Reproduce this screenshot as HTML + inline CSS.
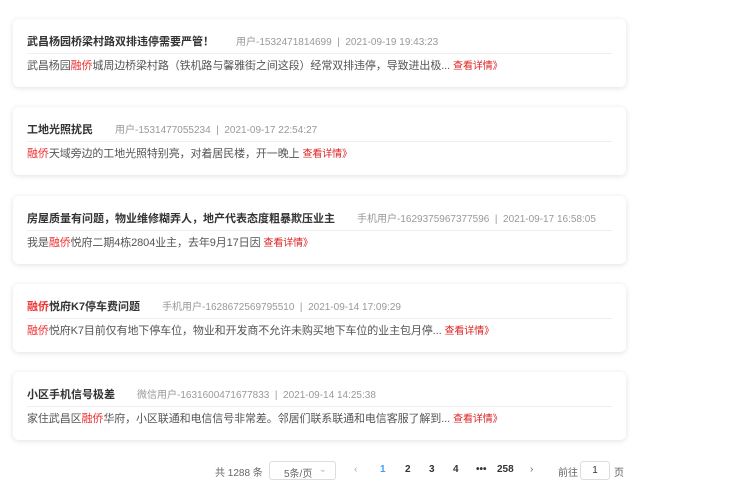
<!DOCTYPE html>
<html><head><meta charset="utf-8"><style>
*{margin:0;padding:0;box-sizing:border-box}
body{width:740px;height:500px;background:#fff;font-family:"Liberation Sans","Noto Sans CJK SC",sans-serif;position:relative;overflow:hidden}
.card{position:absolute;left:13px;width:613px;height:68px;background:#fff;border-radius:6px;box-shadow:0 1px 6px rgba(0,0,0,.12)}
.t{position:absolute;left:14px;top:14px;font-size:11px;font-weight:bold;color:#333;white-space:nowrap}
.t span.m{font-weight:normal;color:#999;font-size:10px;margin-left:22px}
.hl{position:absolute;left:14px;right:14px;top:34px;border-top:1px solid #eee}
.b{position:absolute;left:14px;top:38px;font-size:11px;color:#555;white-space:nowrap;letter-spacing:-0.1px}
.r{color:#e33}
.more{color:#d22;font-size:10px}
.pg{position:absolute;top:464px;font-size:10px;color:#666;white-space:nowrap}
</style></head><body>
<div class="card" style="top:19px"><div class="t">武昌杨园桥梁村路双排违停需要严管！<span class="m">用户-1532471814699 &nbsp;|&nbsp; 2021-09-19 19:43:23</span></div><div class="hl"></div><div class="b">武昌杨园<span class="r">融侨</span>城周边桥梁村路（铁机路与馨雅街之间这段）经常双排违停，导致进出极... <span class="more">查看详情》</span></div></div>
<div class="card" style="top:107px"><div class="t">工地光照扰民<span class="m">用户-1531477055234 &nbsp;|&nbsp; 2021-09-17 22:54:27</span></div><div class="hl"></div><div class="b"><span class="r">融侨</span>天域旁边的工地光照特别亮，对着居民楼，开一晚上 <span class="more">查看详情》</span></div></div>
<div class="card" style="top:196px"><div class="t">房屋质量有问题，物业维修糊弄人，地产代表态度粗暴欺压业主<span class="m">手机用户-1629375967377596 &nbsp;|&nbsp; 2021-09-17 16:58:05</span></div><div class="hl"></div><div class="b">我是<span class="r">融侨</span>悦府二期4栋2804业主，去年9月17日因 <span class="more">查看详情》</span></div></div>
<div class="card" style="top:284px"><div class="t"><span class="r">融侨</span>悦府K7停车费问题<span class="m">手机用户-1628672569795510 &nbsp;|&nbsp; 2021-09-14 17:09:29</span></div><div class="hl"></div><div class="b"><span class="r">融侨</span>悦府K7目前仅有地下停车位，物业和开发商不允许未购买地下车位的业主包月停... <span class="more">查看详情》</span></div></div>
<div class="card" style="top:372px"><div class="t">小区手机信号极差<span class="m">微信用户-1631600471677833 &nbsp;|&nbsp; 2021-09-14 14:25:38</span></div><div class="hl"></div><div class="b">家住武昌区<span class="r">融侨</span>华府，小区联通和电信信号非常差。邻居们联系联通和电信客服了解到... <span class="more">查看详情》</span></div></div>
<div class="pg" style="left:215px">共 1288 条</div>
<div style="position:absolute;left:269px;top:461px;width:67px;height:19px;border:1px solid #ddd;border-radius:3px;font-size:10px;color:#666;padding:3px 0 0 14px">5条/页<span style="position:absolute;right:8px;top:2px;color:#bbb">⌄</span></div>
<div class="pg" style="left:354px;color:#aaa">‹</div>
<div class="pg" style="left:380px;color:#409eff;font-weight:bold">1</div>
<div class="pg" style="left:405px;font-weight:bold;color:#333">2</div>
<div class="pg" style="left:429px;font-weight:bold;color:#333">3</div>
<div class="pg" style="left:453px;font-weight:bold;color:#333">4</div>
<div class="pg" style="left:476px;font-weight:bold;color:#333">•••</div>
<div class="pg" style="left:497px;font-weight:bold;color:#333">258</div>
<div class="pg" style="left:530px;color:#666">›</div>
<div class="pg" style="left:558px">前往</div>
<div style="position:absolute;left:580px;top:461px;width:30px;height:19px;border:1px solid #ddd;border-radius:3px;font-size:10px;color:#333;text-align:center;padding-top:3px">1</div>
<div class="pg" style="left:614px">页</div>
</body></html>
